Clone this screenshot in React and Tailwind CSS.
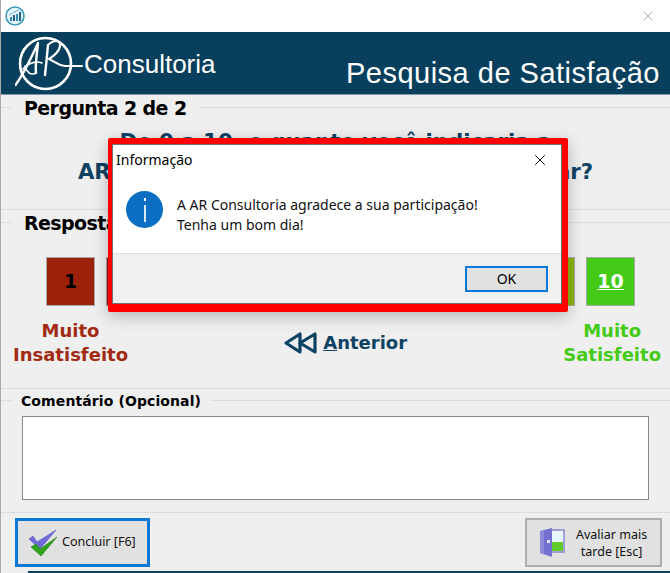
import { X } from "lucide-react";

const sans = "font-['DejaVu_Sans',sans-serif]";

const notas = [
  { n: 1, cor: "bg-[#9c2209]" },
  { n: 2, cor: "bg-[#8f1d0c]" },
  { n: 3, cor: "bg-[#8f1d0c]" },
  { n: 4, cor: "bg-[#8f1d0c]" },
  { n: 5, cor: "bg-[#8f1d0c]" },
  { n: 6, cor: "bg-[#8f1d0c]" },
  { n: 7, cor: "bg-[#b8950f]" },
  { n: 8, cor: "bg-[#b3a312]" },
  { n: 9, cor: "bg-[#8cb60f]" },
  { n: 10, cor: "bg-[#43cb17]" },
];

function Secao({ titulo, className, textoClass }) {
  return (
    <div className={`flex items-center ${className}`}>
      <div className="w-[10px] h-px bg-[#dcdcdc]" />
      <span className={`font-bold text-black leading-none pt-[2px] ${sans} ${textoClass}`}>{titulo}</span>
      <div className="flex-1 h-px bg-[#dcdcdc]" />
    </div>
  );
}

function LogoAR() {
  return (
    <svg width="70" height="56" viewBox="0 0 70 56" fill="none" stroke="white" strokeLinecap="round" strokeLinejoin="round" className="shrink-0">
      <circle cx="30.5" cy="27.5" r="25.5" strokeWidth="2.6" />
      <path d="M0.5 49 C10 36 17 20 23 7 C22 18 20 28 21 37" strokeWidth="2.4" />
      <path d="M10 30 C12 36 15 40 21 37" strokeWidth="1.6" />
      <path d="M8 33 C14 26 22 25 27 27" strokeWidth="1.6" />
      <path d="M33 9 C32 20 31 30 30 39" strokeWidth="2.4" />
      <path d="M33 9 C38 4 46 3 45 10 C44 17 37 21 34 23 C39 25 42 29 50 30 L67 30" strokeWidth="2.2" />
    </svg>
  );
}

function IconeApp() {
  return (
    <svg width="20" height="20" viewBox="0 0 20 20" className="shrink-0">
      <circle cx="10" cy="10" r="9" fill="#e9f5fa" stroke="#3f9dbb" strokeWidth="1.6" />
      <rect x="5" y="11" width="2" height="4" fill="#2f8fb5" />
      <rect x="8" y="9" width="2" height="6" fill="#1c5f88" />
      <rect x="11" y="8" width="2" height="7" fill="#2f8fb5" />
      <rect x="14" y="6" width="2" height="9" fill="#1c5f88" />
      <path d="M4 9 L9 6 L14 4" stroke="#58b7d3" fill="none" />
    </svg>
  );
}

function IconeCheck() {
  return (
    <svg width="30" height="28" viewBox="0 0 30 28" className="shrink-0">
      <path d="M1 10 L5 7 L9 13 L28 1 L12 20 Z" fill="#6f6bd8" stroke="#5b57b8" strokeWidth="0.6" />
      <path d="M3 18 L8 15 L12 20 L29 8 L13 27 Z" fill="#2fa31c" stroke="#1f7d12" strokeWidth="0.6" />
    </svg>
  );
}

function IconePorta() {
  return (
    <svg width="25" height="30" viewBox="0 0 25 30" className="shrink-0">
      <rect x="11" y="2" width="13" height="22" fill="#e7f6fb" stroke="#8a86c8" strokeWidth="1.5" />
      <rect x="12" y="14" width="11" height="9" fill="#62c92a" />
      <path d="M0 3 L12 0 V29 L0 25 Z" fill="#7470d0" />
      <path d="M0 3 L4 2 V26 L0 25 Z" fill="#8f8bdc" />
      <rect x="7" y="12" width="3" height="3" fill="#e8e8ff" />
    </svg>
  );
}

function Dialogo() {
  return (
    <div className="absolute left-[107px] top-[138px] w-[460px] h-[174px] border-solid border-[#ff0000] border-t-[6px] border-l-[4px] border-r-[6px] border-b-[8px] rounded-[2px] shadow-[0_4px_16px_rgba(0,0,0,0.25)]">
      <div className="h-full flex flex-col border border-[#6f6f6f] font-['Noto_Sans',sans-serif]">
        <div className="bg-white h-[108px] flex flex-col">
          <div className="flex items-center justify-between h-[28px] pl-[3px] pr-[12px] pt-[1px]">
            <span className="text-[14px] text-black">Informação</span>
            <X size={18} strokeWidth={1.2} className="text-black" />
          </div>
          <div className="flex items-start gap-[14px] pl-[13px] pt-[18px]">
            <div className="w-[37px] h-[37px] rounded-full bg-[#0a6fc2] flex items-center justify-center shrink-0">
              <svg width="6" height="24" viewBox="0 0 6 24">
                <rect x="2" y="0" width="2" height="3" fill="#fff" />
                <rect x="2" y="7" width="2" height="17" fill="#d7e9f7" />
              </svg>
            </div>
            <p className="text-[14px] leading-[20px] text-[#111] mt-[4px]">
              A AR Consultoria agradece a sua participação!
              <br />
              Tenha um bom dia!
            </p>
          </div>
        </div>
        <div className="flex-1 bg-[#f0f0f0] border-t border-[#dfdfdf] flex items-center justify-end pr-[13px]">
          <div className="w-[83px] h-[26px] bg-[#e1e1e1] border-2 border-[#0a78d7] flex items-center justify-center text-[14px] text-black">
            OK
          </div>
        </div>
      </div>
    </div>
  );
}

export default function App() {
  return (
    <div className="relative w-[670px] h-[573px] overflow-hidden bg-[#efefef] border-l border-[#a9a9a9] flex flex-col">
      {/* Barra de titulo */}
      <div className="h-[32px] bg-white flex items-center justify-between pl-[4px] pr-[14px] shrink-0">
        <IconeApp />
        <X size={16} strokeWidth={1} className="text-[#777]" />
      </div>

      {/* Cabecalho */}
      <div className="h-[63px] bg-[#073f5c] border-b border-[#7f9aaa] flex shrink-0 font-['Liberation_Sans',sans-serif] text-white">
        <div className="flex items-center pl-[14px] pt-[2px]">
          <LogoAR />
          <span className="text-[26px] -ml-[1px] leading-none">Consultoria</span>
        </div>
        <div className="flex-1 flex justify-end items-end pr-[10px] pb-[6px]">
          <span className="text-[29px] leading-none tracking-[0.5px]">Pesquisa de Satisfação</span>
        </div>
      </div>

      {/* Pergunta */}
      <Secao titulo="Pergunta 2 de 2" className="h-[24px] shrink-0" textoClass="px-[13px] text-[19px] tracking-[-0.6px]" />
      <div className={`h-[90px] text-center font-bold text-[#0d4263] text-[21.3px] leading-[30px] pt-[8px] shrink-0 ${sans}`}>
        De 0 a 10, o quanto você indicaria a
        <br />
        AR Consultoria para um amigo ou familiar?
      </div>
      <div className="h-px bg-[#dcdcdc] shrink-0" />

      {/* Resposta */}
      <Secao titulo="Resposta" className="h-[24px] shrink-0" textoClass="px-[13px] text-[19px] tracking-[-0.6px]" />
      <div className="flex gap-[11px] pl-[45px] mt-[23px] shrink-0">
        {notas.map((nota) => (
          <div
            key={nota.n}
            className={`w-[49px] h-[49px] border border-[#a8a8a8] flex items-center justify-center font-bold text-[19px] ${sans} ${nota.cor} ${nota.n === 10 ? "text-white underline" : "text-black"}`}
          >
            {nota.n}
          </div>
        ))}
      </div>
      <div className={`flex justify-between items-start mt-[13px] pl-[12px] pr-[9px] font-bold text-[18px] leading-[24px] text-center shrink-0 ${sans}`}>
        <div className="text-[#a12a12]">
          Muito
          <br />
          Insatisfeito
        </div>
        <div className="flex items-center gap-[5px] mt-[12px] text-[#0d4263]">
          <svg width="34" height="22" viewBox="0 0 34 22" fill="none" stroke="#0d4263" strokeWidth="3.2" strokeLinejoin="round">
            <path d="M2 11 L16 2 V20 Z" />
            <path d="M16 11 L31 2 V20 Z" />
          </svg>
          <span>
            <span className="underline">A</span>nterior
          </span>
        </div>
        <div className="text-[#43cb17]">
          Muito
          <br />
          Satisfeito
        </div>
      </div>

      {/* Comentario */}
      <div className="h-px bg-[#dcdcdc] mt-[21px] shrink-0" />
      <Secao titulo="Comentário (Opcional)" className="h-[22px] shrink-0" textoClass="px-[10px] text-[14px] tracking-[0.1px]" />
      <div className="h-[84px] mx-[21px] mt-[5px] bg-white border border-[#8a8a8a] shrink-0" />
      <div className="h-px bg-[#dcdcdc] mt-[12px] shrink-0" />

      {/* Botoes */}
      <div className="flex justify-between pl-[14px] pr-[8px] pt-[5px] shrink-0 font-['Noto_Sans',sans-serif] text-[12.5px] text-[#111]">
        <div className="w-[135px] h-[49px] bg-[#e1e1e1] border-[3px] border-[#0a78d7] flex items-center pl-[10px] gap-[4px]">
          <IconeCheck />
          <span>Concluir [F6]</span>
        </div>
        <div className="w-[137px] h-[49px] bg-[#e1e1e1] border-2 border-[#adadad] flex items-center pl-[13px] gap-[11px] text-center leading-[17px]">
          <IconePorta />
          <span>
            Avaliar mais
            <br />
            tarde [Esc]
          </span>
        </div>
      </div>
      <div className="absolute left-[27px] right-0 bottom-0 h-[2px] bg-[#073f5c]" />

      <Dialogo />
    </div>
  );
}
